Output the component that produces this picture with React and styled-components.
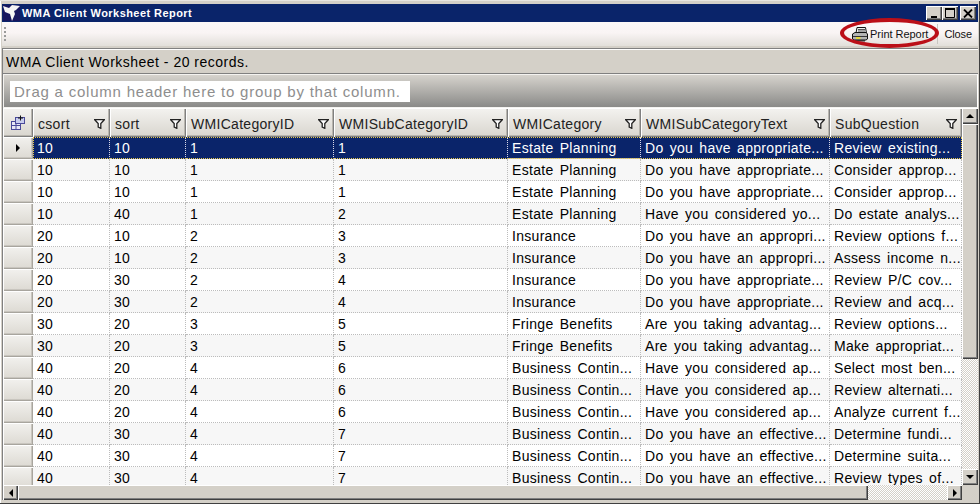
import React from 'react';
import styled, { createGlobalStyle, css } from 'styled-components';

const GlobalStyle = createGlobalStyle`
  html, body {
    margin: 0;
    padding: 0;
    background: #d4d0c8;
  }
`;

const font = `"Liberation Sans", Arial, sans-serif`;
const dither = `repeating-conic-gradient(#d4d0c8 0 25%, #ffffff 0 50%) 0 0 / 2px 2px`;
const raised = css`
  background: #d4d0c8;
  box-shadow: inset 1px 1px 0 #ffffff, inset -1px -1px 0 #404040, inset -2px -2px 0 #808080;
`;
const softRaised = css`
  box-shadow: inset 1px 1px 0 #ffffff, inset -1px -1px 0 #a8a59e, inset -2px -2px 0 #c8c5be;
`;

const Window = styled.div`
  position: relative;
  width: 980px;
  height: 504px;
  box-sizing: border-box;
  padding: 4px 2px 4px 2px;
  display: flex;
  flex-direction: column;
  overflow: hidden;
  background: #d4d0c8;
  box-shadow: inset 0 1px 0 #e8e6e1, inset 0 -1px 0 #404040, inset -1px 0 0 #404040, inset 1px 0 0 #ffffff;
  font-family: ${font};
  color: #000;
`;

const TitleBar = styled.div`
  height: 18px;
  flex: none;
  background: #0a246a;
  display: flex;
  align-items: center;
  padding: 0 2px 0 1px;
`;

const TitleText = styled.span`
  flex: 1;
  margin-left: 2px;
  color: #fff;
  font-size: 11px;
  font-weight: bold;
  letter-spacing: 0.44px;
`;

const WinButton = styled.button`
  ${raised}
  width: 16px;
  height: 14px;
  margin-left: ${p => (p.$gap ? '2px' : '0')};
  border: 0;
  padding: 0;
  display: flex;
  align-items: center;
  justify-content: center;
`;

const ToolBar = styled.div`
  position: relative;
  height: 24px;
  flex: none;
  background: linear-gradient(#fbf8f8 0%, #f9f4f4 45%, #e2dfda 100%);
  display: flex;
  align-items: center;
  justify-content: flex-end;
  padding-right: 6px;
  font-size: 11px;
`;

const Grip = styled.div`
  position: absolute;
  left: 2px;
  top: 5px;
  width: 2px;
  height: 14px;
  background: repeating-linear-gradient(#9a9a9a 0 2px, transparent 2px 4px);
`;

const ToolButton = styled.div`
  display: flex;
  align-items: center;
  gap: 2px;
  padding-right: 9px;
  letter-spacing: -0.03px;
  color: #111;
`;

const CloseButton = styled.div`
  padding-left: 6px;
  border-left: 1px solid #c9c6c0;
  height: 20px;
  line-height: 20px;
  letter-spacing: -0.1px;
  color: #111;
`;

const Callout = styled.div`
  position: absolute;
  right: 39px;
  top: -4px;
  width: 91px;
  height: 22px;
  border: 4px solid #bb0f18;
  border-radius: 50%;
  pointer-events: none;
`;

const Panel = styled.div`
  flex: 1;
  min-height: 0;
  margin-top: 2px;
  display: flex;
  flex-direction: column;
  border-top: 1px solid #808080;
  border-left: 1px solid #808080;
`;

const CaptionBar = styled.div`
  height: 25px;
  flex: none;
  box-sizing: border-box;
  background: #d4d0c8;
  border-top: 1px solid #fff;
  border-bottom: 1px solid #808080;
  padding-left: 3px;
  font-size: 14px;
  line-height: 25px;
  letter-spacing: 0.49px;
  white-space: nowrap;
`;

const GroupPanel = styled.div`
  height: 34px;
  flex: none;
  box-sizing: border-box;
  background: linear-gradient(#d6d3cd, #8a8a88);
  border: 1px solid #f4f3f0;
  border-right-color: #fff;
  padding: 6px 0 0 6px;
`;

const GroupHint = styled.div`
  width: 396px;
  height: 21px;
  background: #fff;
  color: #8e8e8e;
  font-size: 15px;
  line-height: 21px;
  padding-left: 4px;
  letter-spacing: 0.78px;
  white-space: nowrap;
`;

const GridArea = styled.div`
  flex: 1;
  min-height: 0;
  display: grid;
  grid-template-columns: 1fr 16px;
  grid-template-rows: 1fr 15px;
  background: #d4d0c8;
`;

const Table = styled.div`
  overflow: hidden;
  min-width: 0;
  min-height: 0;
  background: #fff;
`;

const columns = '30px 77px 76px 148px 174px 133px 189px 132px';

const HeaderRow = styled.div`
  display: grid;
  grid-template-columns: ${columns};
  height: 29px;
`;

const HeaderCell = styled.div`
  box-shadow: inset 1px 1px 0 #ffffff, inset -1px -1px 0 #808080, inset -2px -2px 0 #b8b5ae;
  background: linear-gradient(#f4f3f0, #d8d5ce);
  box-sizing: border-box;
  display: flex;
  align-items: center;
  justify-content: space-between;
  padding: 3px 5px 0 5px;
  font-size: 14px;
  letter-spacing: 0.3px;
  color: #222;
  white-space: nowrap;
  overflow: hidden;
`;

const CornerCell = styled(HeaderCell)`
  justify-content: center;
  padding: 0;
`;

const Row = styled.div`
  position: relative;
  display: grid;
  grid-template-columns: ${columns};
  height: 22px;
  background: ${p => (p.$selected ? '#0a246a' : p.$alt ? '#f7f7f7' : '#fff')};
  color: ${p => (p.$selected ? '#fff' : '#000')};
`;

const FocusFrame = styled.div`
  position: absolute;
  left: 30px;
  right: 0;
  top: 0;
  bottom: 0;
  border: 1px dotted #e8c84a;
  pointer-events: none;
`;

const RowHandle = styled.div`
  ${softRaised}
  background: linear-gradient(#f2f1ee, #dcd9d2);
  display: flex;
  align-items: center;
  justify-content: center;
`;

const Cell = styled.div`
  box-sizing: border-box;
  padding: 1px 0 0 4px;
  font-size: 14px;
  line-height: 21px;
  letter-spacing: 0.3px;
  word-spacing: 2px;
  white-space: nowrap;
  overflow: hidden;
  border-right: 1px dotted ${p => (p.$selected ? '#d8d8e8' : '#bcbcbc')};
  border-bottom: 1px dotted #bcbcbc;
`;

const VScroll = styled.div`
  display: flex;
  flex-direction: column;
  background: ${dither};
`;

const HScroll = styled.div`
  display: flex;
  background: ${dither};
`;

const ScrollButton = styled.div`
  ${raised}
  flex: none;
  width: ${p => (p.$horizontal ? '15px' : '16px')};
  height: ${p => (p.$horizontal ? '15px' : '16px')};
  display: flex;
  align-items: center;
  justify-content: center;
  margin-top: ${p => (p.$end ? 'auto' : '0')};
  margin-left: ${p => (p.$endX ? 'auto' : '0')};
`;

const Thumb = styled.div`
  ${raised}
  flex: none;
  width: ${p => p.$w || 'auto'};
  height: ${p => p.$h || 'auto'};
`;

const Corner = styled.div`
  background: #d4d0c8;
`;

const Arrow = ({ dir }) => {
  const pts = {
    up: '0,6 8,6 4,2',
    down: '0,2 8,2 4,6',
    left: '6,0 6,8 2,4',
    right: '2,0 2,8 6,4',
  }[dir];
  return (
    <svg width="8" height="8" viewBox="0 0 8 8"><polygon points={pts} fill="#000" /></svg>
  );
};

const FilterIcon = () => (
  <svg width="11" height="10" viewBox="0 0 11 10" style={{ flex: 'none' }}>
    <path d="M0.7 0.7H10.3L6.8 4.6V9.3L4.2 8V4.6Z" fill="#fff" stroke="#222" strokeWidth="1.3" />
  </svg>
);

const ChooserIcon = () => (
  <svg width="16" height="16" viewBox="0 0 16 16">
    <rect x="1.5" y="6.5" width="9" height="8" fill="#e8e8f6" stroke="#4a4a9a" />
    <path d="M1.5 10.5H10.5M6 6.5V14.5" stroke="#4a4a9a" />
    <rect x="5.5" y="2.5" width="9" height="6" fill="#c9cdee" stroke="#4a4a9a" />
    <path d="M10.5 0.5V5.5M8 3H13" stroke="#111" />
  </svg>
);

const AppLogo = () => (
  <svg width="17" height="16" viewBox="0 0 17 16" style={{ flex: 'none' }}>
    <rect width="17" height="16" fill="#16165e" />
    <path d="M0 1L6 3L9 0L17 1L13 5L11 6L12 9L9 16L7 9L2 7Z" fill="#f4f4f4" />
  </svg>
);

const PrinterIcon = () => (
  <svg width="16" height="15" viewBox="0 0 16 15" style={{ flex: 'none' }}>
    <path d="M5 0.5H13.5L14.5 6H4Z" fill="#f0f0f0" stroke="#111" />
    <path d="M6 2.5H13M6 4H13" stroke="#555" />
    <path d="M0.5 7L3 5.5H14L15.5 7V12L14 13H2L0.5 12Z" fill="#b4b4b4" stroke="#111" />
    <path d="M1 9.5H15" stroke="#333" />
    <rect x="4" y="10.2" width="4.5" height="1.6" fill="#f0e020" />
    <path d="M3 13H13V14.5H3Z" fill="#333" />
  </svg>
);

const headers = ['csort', 'sort', 'WMICategoryID', 'WMISubCategoryID', 'WMICategory', 'WMISubCategoryText', 'SubQuestion'];

const rows = [
  ['10', '10', '1', '1', 'Estate Planning', 'Do you have appropriate...', 'Review existing...'],
  ['10', '10', '1', '1', 'Estate Planning', 'Do you have appropriate...', 'Consider approp...'],
  ['10', '10', '1', '1', 'Estate Planning', 'Do you have appropriate...', 'Consider approp...'],
  ['10', '40', '1', '2', 'Estate Planning', 'Have you considered yo...', 'Do estate analys...'],
  ['20', '10', '2', '3', 'Insurance', 'Do you have an appropri...', 'Review options f...'],
  ['20', '10', '2', '3', 'Insurance', 'Do you have an appropri...', 'Assess income n...'],
  ['20', '30', '2', '4', 'Insurance', 'Do you have appropriate...', 'Review P/C cov...'],
  ['20', '30', '2', '4', 'Insurance', 'Do you have appropriate...', 'Review and acq...'],
  ['30', '20', '3', '5', 'Fringe Benefits', 'Are you taking advantag...', 'Review options...'],
  ['30', '20', '3', '5', 'Fringe Benefits', 'Are you taking advantag...', 'Make appropriat...'],
  ['40', '20', '4', '6', 'Business Contin...', 'Have you considered ap...', 'Select most ben...'],
  ['40', '20', '4', '6', 'Business Contin...', 'Have you considered ap...', 'Review alternati...'],
  ['40', '20', '4', '6', 'Business Contin...', 'Have you considered ap...', 'Analyze current f...'],
  ['40', '30', '4', '7', 'Business Contin...', 'Do you have an effective...', 'Determine fundi...'],
  ['40', '30', '4', '7', 'Business Contin...', 'Do you have an effective...', 'Determine suita...'],
  ['40', '30', '4', '7', 'Business Contin...', 'Do you have an effective...', 'Review types of...'],
];

const App = () => (
  <Window>
    <GlobalStyle />
    <TitleBar>
      <AppLogo />
      <TitleText>WMA Client Worksheet Report</TitleText>
      <WinButton>
        <svg width="9" height="9" viewBox="0 0 9 9"><rect x="1" y="7" width="6" height="2" fill="#000" /></svg>
      </WinButton>
      <WinButton>
        <svg width="10" height="10" viewBox="0 0 10 10"><path d="M0.5 1.5H9.5V9.5H0.5Z" fill="none" stroke="#000" /><rect x="0" y="0" width="10" height="2" fill="#000" /></svg>
      </WinButton>
      <WinButton $gap>
        <svg width="10" height="9" viewBox="0 0 10 9"><path d="M1 0.5L9 8.5M9 0.5L1 8.5" stroke="#000" strokeWidth="1.8" /></svg>
      </WinButton>
    </TitleBar>
    <ToolBar>
      <Grip />
      <ToolButton><PrinterIcon />Print Report</ToolButton>
      <CloseButton>Close</CloseButton>
      <Callout />
    </ToolBar>
    <Panel>
      <CaptionBar>WMA Client Worksheet - 20 records.</CaptionBar>
      <GroupPanel>
        <GroupHint>Drag a column header here to group by that column.</GroupHint>
      </GroupPanel>
      <GridArea>
        <Table>
          <HeaderRow>
            <CornerCell><ChooserIcon /></CornerCell>
            {headers.map(h => (
              <HeaderCell key={h}>{h}<FilterIcon /></HeaderCell>
            ))}
          </HeaderRow>
          {rows.map((row, i) => (
            <Row key={i} $selected={i === 0} $alt={i % 2 === 1}>
              <RowHandle>{i === 0 && <Arrow dir="right" />}</RowHandle>
              {row.map((value, j) => (
                <Cell key={j} $selected={i === 0}>{value}</Cell>
              ))}
              {i === 0 && <FocusFrame />}
            </Row>
          ))}
        </Table>
        <VScroll>
          <ScrollButton><Arrow dir="up" /></ScrollButton>
          <Thumb $h="235px" />
          <ScrollButton $end><Arrow dir="down" /></ScrollButton>
        </VScroll>
        <HScroll>
          <ScrollButton $horizontal><Arrow dir="left" /></ScrollButton>
          <Thumb $w="850px" />
          <ScrollButton $horizontal $endX><Arrow dir="right" /></ScrollButton>
        </HScroll>
        <Corner />
      </GridArea>
    </Panel>
  </Window>
);

export default App;
